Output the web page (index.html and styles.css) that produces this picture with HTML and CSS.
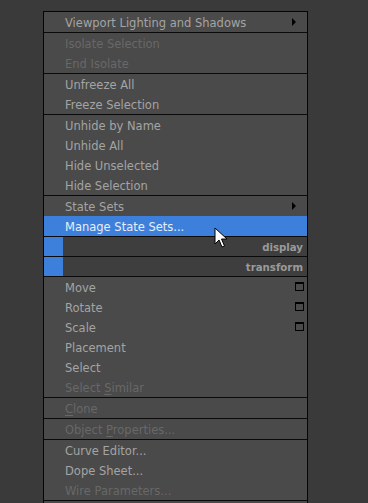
FILE: index.html
```html
<!DOCTYPE html>
<html>
<head>
<meta charset="utf-8">
<link rel="stylesheet" href="styles.css">
</head>
<body>
<div class="menu">
  <div class="item sub">Viewport Lighting and Shadows<span class="arrow"></span></div>
  <div class="sep"></div>
  <div class="item dis">Isolate Selection</div>
  <div class="item dis">End Isolate</div>
  <div class="sep"></div>
  <div class="item">Unfreeze All</div>
  <div class="item">Freeze Selection</div>
  <div class="sep"></div>
  <div class="item">Unhide by Name</div>
  <div class="item">Unhide All</div>
  <div class="item">Hide Unselected</div>
  <div class="item">Hide Selection</div>
  <div class="sep"></div>
  <div class="item sub">State Sets<span class="arrow"></span></div>
  <div class="item hl">Manage State Sets...</div>
  <div class="sep"></div>
  <div class="quad"><span class="blue"></span><span class="qlabel">display</span></div>
  <div class="sep"></div>
  <div class="quad"><span class="blue"></span><span class="qlabel">transform</span></div>
  <div class="sep"></div>
  <div class="item">Move<span class="box"></span></div>
  <div class="item">Rotate<span class="box"></span></div>
  <div class="item">Scale<span class="box"></span></div>
  <div class="item">Placement</div>
  <div class="item">Select</div>
  <div class="item dis">Select <u>S</u>imilar</div>
  <div class="sep"></div>
  <div class="item dis"><u>C</u>lone</div>
  <div class="sep"></div>
  <div class="item dis">Object <u>P</u>roperties...</div>
  <div class="sep"></div>
  <div class="item">Curve Editor...</div>
  <div class="item">Dope Sheet...</div>
  <div class="item dis">Wire Parameters...</div>
  <div class="sep"></div>
  <div class="item"></div>
  <svg class="cursor" width="14" height="22" viewBox="0 0 14 22"><path d="M1 1 L1 17 L5 13 L8 20 L10.5 19 L7.5 12 L13 12 Z" fill="#fff" stroke="#000" stroke-width="1"/></svg>
</div>
</body>
</html>
```
FILE: styles.css
```css
html, body {
  margin: 0;
  padding: 0;
  background: #3a3a3a;
  overflow: hidden;
}
body {
  width: 368px;
  height: 503px;
}
.menu {
  position: relative;
  margin: 11px 0 0 43px;
  width: 263px;
  border: 1px solid #050505;
  background: #4a4a4a;
  font-family: "DejaVu Sans", "Liberation Sans", sans-serif;
  font-size: 11.5px;
  color: #a4a4a4;
}
.item {
  position: relative;
  height: 19px;
  padding-top: 1px;
  line-height: 20px;
  padding-left: 21px;
  white-space: nowrap;
}
.item u {
  text-decoration: underline;
  text-underline-offset: 2px;
}
.dis {
  color: #686868;
}
.hl {
  background: #3d80dc;
  color: #e8eef8;
}
.sep {
  height: 1px;
  background: #0a0a0a;
}
.arrow {
  position: absolute;
  right: 11px;
  top: 6px;
  width: 0;
  height: 0;
  border-top: 4px solid transparent;
  border-bottom: 4px solid transparent;
  border-left: 4px solid #000;
}
.box {
  position: absolute;
  right: 3px;
  top: 5px;
  width: 7px;
  height: 6px;
  border: 1px solid #000;
  border-top-width: 2px;
  background: #4a4a4a;
}
.quad {
  display: flex;
  align-items: center;
  height: 19px;
  background: #3e3e3e;
}
.blue {
  width: 19px;
  height: 19px;
  background: #3d80dc;
}
.qlabel {
  margin-left: auto;
  padding-right: 4px;
  padding-top: 1px;
  font-weight: bold;
  color: #9a9a9a;
  font-size: 10.2px;
}
.cursor {
  position: absolute;
  left: 170px;
  top: 215px;
}
```
